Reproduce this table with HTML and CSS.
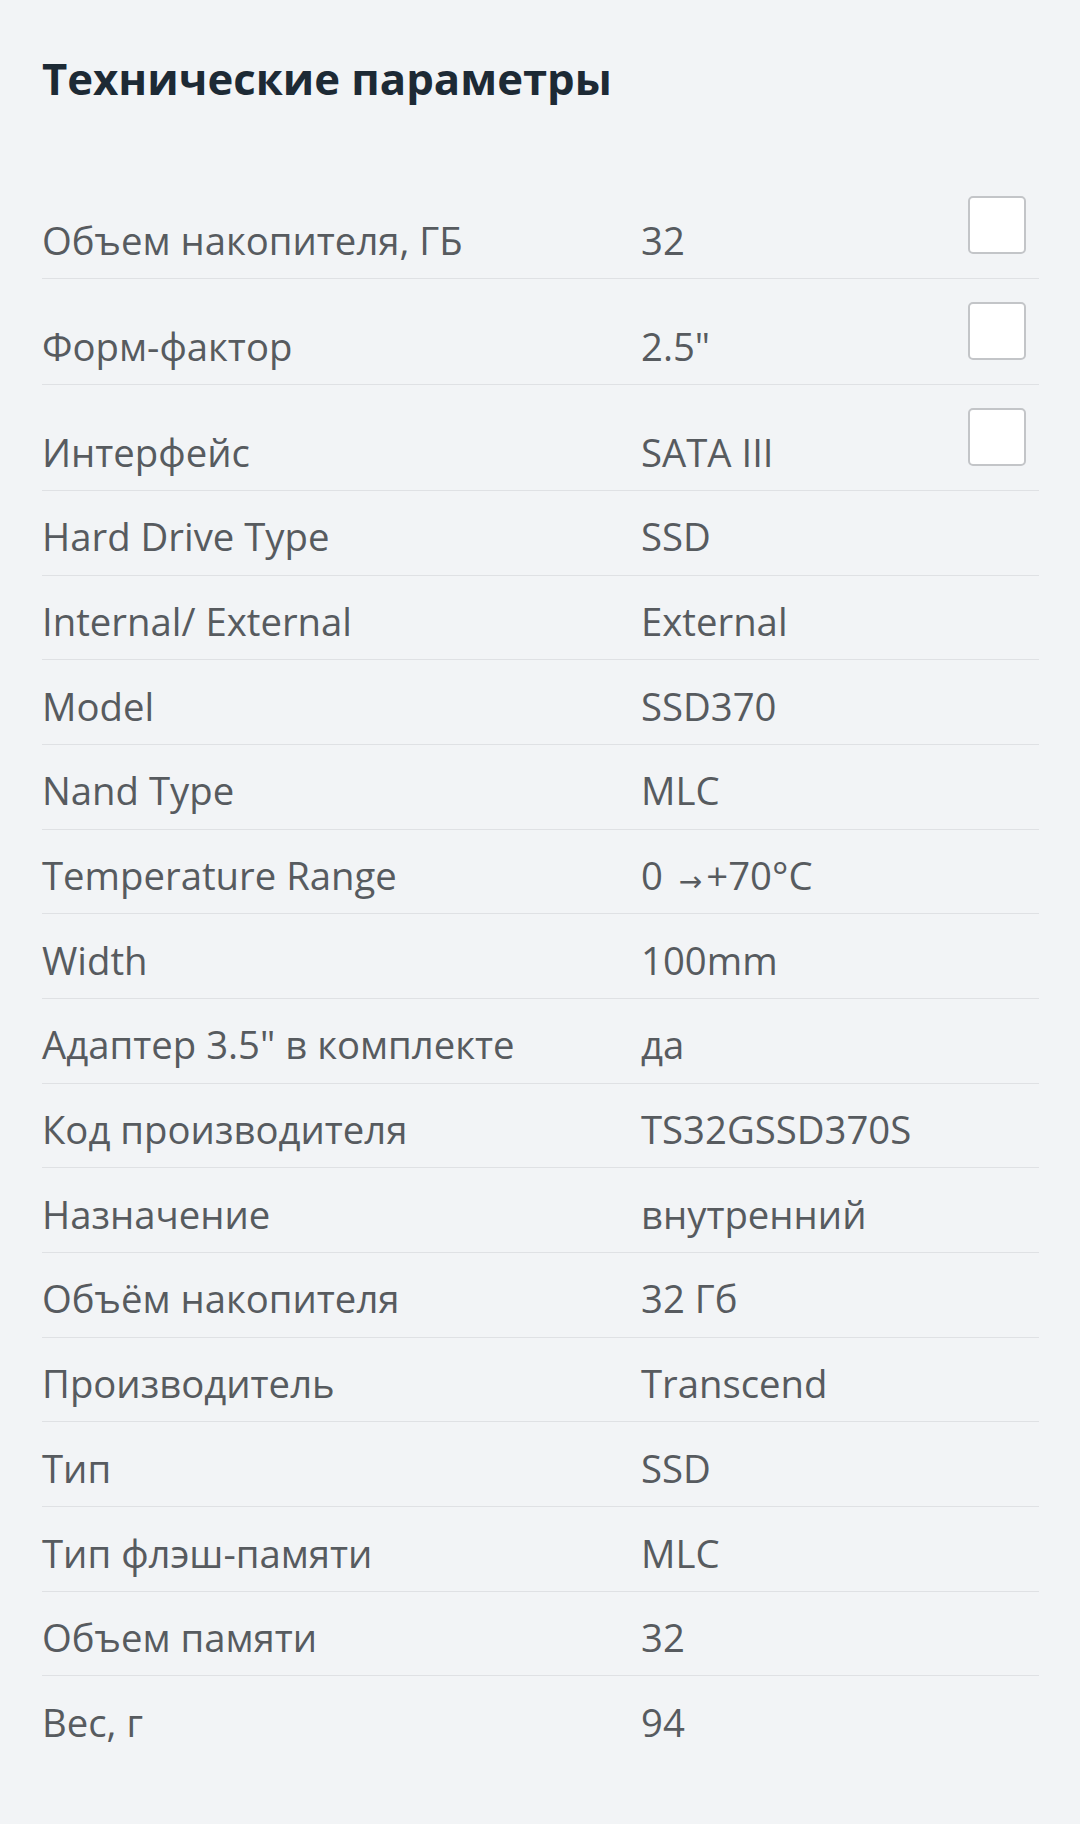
FILE: index.html
```html
<!DOCTYPE html>
<html lang="ru">
<head>
<meta charset="utf-8">
<title>Технические параметры</title>
<link rel="stylesheet" href="styles.css">
</head>
<body>
<section class="specs">
  <h2 class="specs-title">Технические параметры</h2>
  <div class="spec-list">
    <div class="spec-row has-check">
      <div class="spec-name">Объем накопителя, ГБ</div>
      <div class="spec-value">32</div>
      <div class="spec-check"><span class="checkbox"></span></div>
    </div>
    <div class="spec-row has-check">
      <div class="spec-name">Форм-фактор</div>
      <div class="spec-value">2.5"</div>
      <div class="spec-check"><span class="checkbox"></span></div>
    </div>
    <div class="spec-row has-check">
      <div class="spec-name">Интерфейс</div>
      <div class="spec-value">SATA III</div>
      <div class="spec-check"><span class="checkbox"></span></div>
    </div>
    <div class="spec-row">
      <div class="spec-name">Hard Drive Type</div>
      <div class="spec-value">SSD</div>
    </div>
    <div class="spec-row">
      <div class="spec-name">Internal/ External</div>
      <div class="spec-value">External</div>
    </div>
    <div class="spec-row">
      <div class="spec-name">Model</div>
      <div class="spec-value">SSD370</div>
    </div>
    <div class="spec-row">
      <div class="spec-name">Nand Type</div>
      <div class="spec-value">MLC</div>
    </div>
    <div class="spec-row">
      <div class="spec-name">Temperature Range</div>
      <div class="spec-value">0 <span class="arrow">→</span>+70°C</div>
    </div>
    <div class="spec-row">
      <div class="spec-name">Width</div>
      <div class="spec-value">100mm</div>
    </div>
    <div class="spec-row">
      <div class="spec-name">Адаптер 3.5" в комплекте</div>
      <div class="spec-value">да</div>
    </div>
    <div class="spec-row">
      <div class="spec-name">Код производителя</div>
      <div class="spec-value">TS32GSSD370S</div>
    </div>
    <div class="spec-row">
      <div class="spec-name">Назначение</div>
      <div class="spec-value">внутренний</div>
    </div>
    <div class="spec-row">
      <div class="spec-name">Объём накопителя</div>
      <div class="spec-value">32 Гб</div>
    </div>
    <div class="spec-row">
      <div class="spec-name">Производитель</div>
      <div class="spec-value">Transcend</div>
    </div>
    <div class="spec-row">
      <div class="spec-name">Тип</div>
      <div class="spec-value">SSD</div>
    </div>
    <div class="spec-row">
      <div class="spec-name">Тип флэш-памяти</div>
      <div class="spec-value">MLC</div>
    </div>
    <div class="spec-row">
      <div class="spec-name">Объем памяти</div>
      <div class="spec-value">32</div>
    </div>
    <div class="spec-row last">
      <div class="spec-name">Вес, г</div>
      <div class="spec-value">94</div>
    </div>
  </div>
</section>
</body>
</html>
```

FILE: styles.css
```css
html, body {
  margin: 0;
  padding: 0;
  background: #f2f4f6;
}

body {
  font-family: "Open Sans", "Noto Sans", sans-serif;
  color: #575b5f;
}

.specs {
  padding: 50px 41px 0 42px;
}

.specs-title {
  margin: 0;
  font-size: 43.7px;
  line-height: 56px;
  font-weight: 700;
  color: #1d2a35;
}

.spec-list {
  margin-top: 67px;
}

.spec-row {
  display: grid;
  grid-template-columns: 599px 1fr auto;
  border-bottom: 1px solid #dfe1e4;
  font-size: 38.3px;
  line-height: 44px;
}

.spec-row.last {
  border-bottom: none;
}

.spec-name,
.spec-value {
  height: 44px;
  padding: 23.45px 0 16.24px;
  align-self: end;
  white-space: nowrap;
}

.spec-check {
  padding: 23px 13px 24px 0;
}

.checkbox {
  display: block;
  width: 58px;
  height: 58px;
  box-sizing: border-box;
  border: 2px solid #c3c5c8;
  border-radius: 5px;
  background: #ffffff;
}

.arrow {
  font-family: "DejaVu Sans", sans-serif;
  font-size: 28px;
  line-height: 0;
  vertical-align: -1px;
  margin: 0 4px 0 6px;
}
```
